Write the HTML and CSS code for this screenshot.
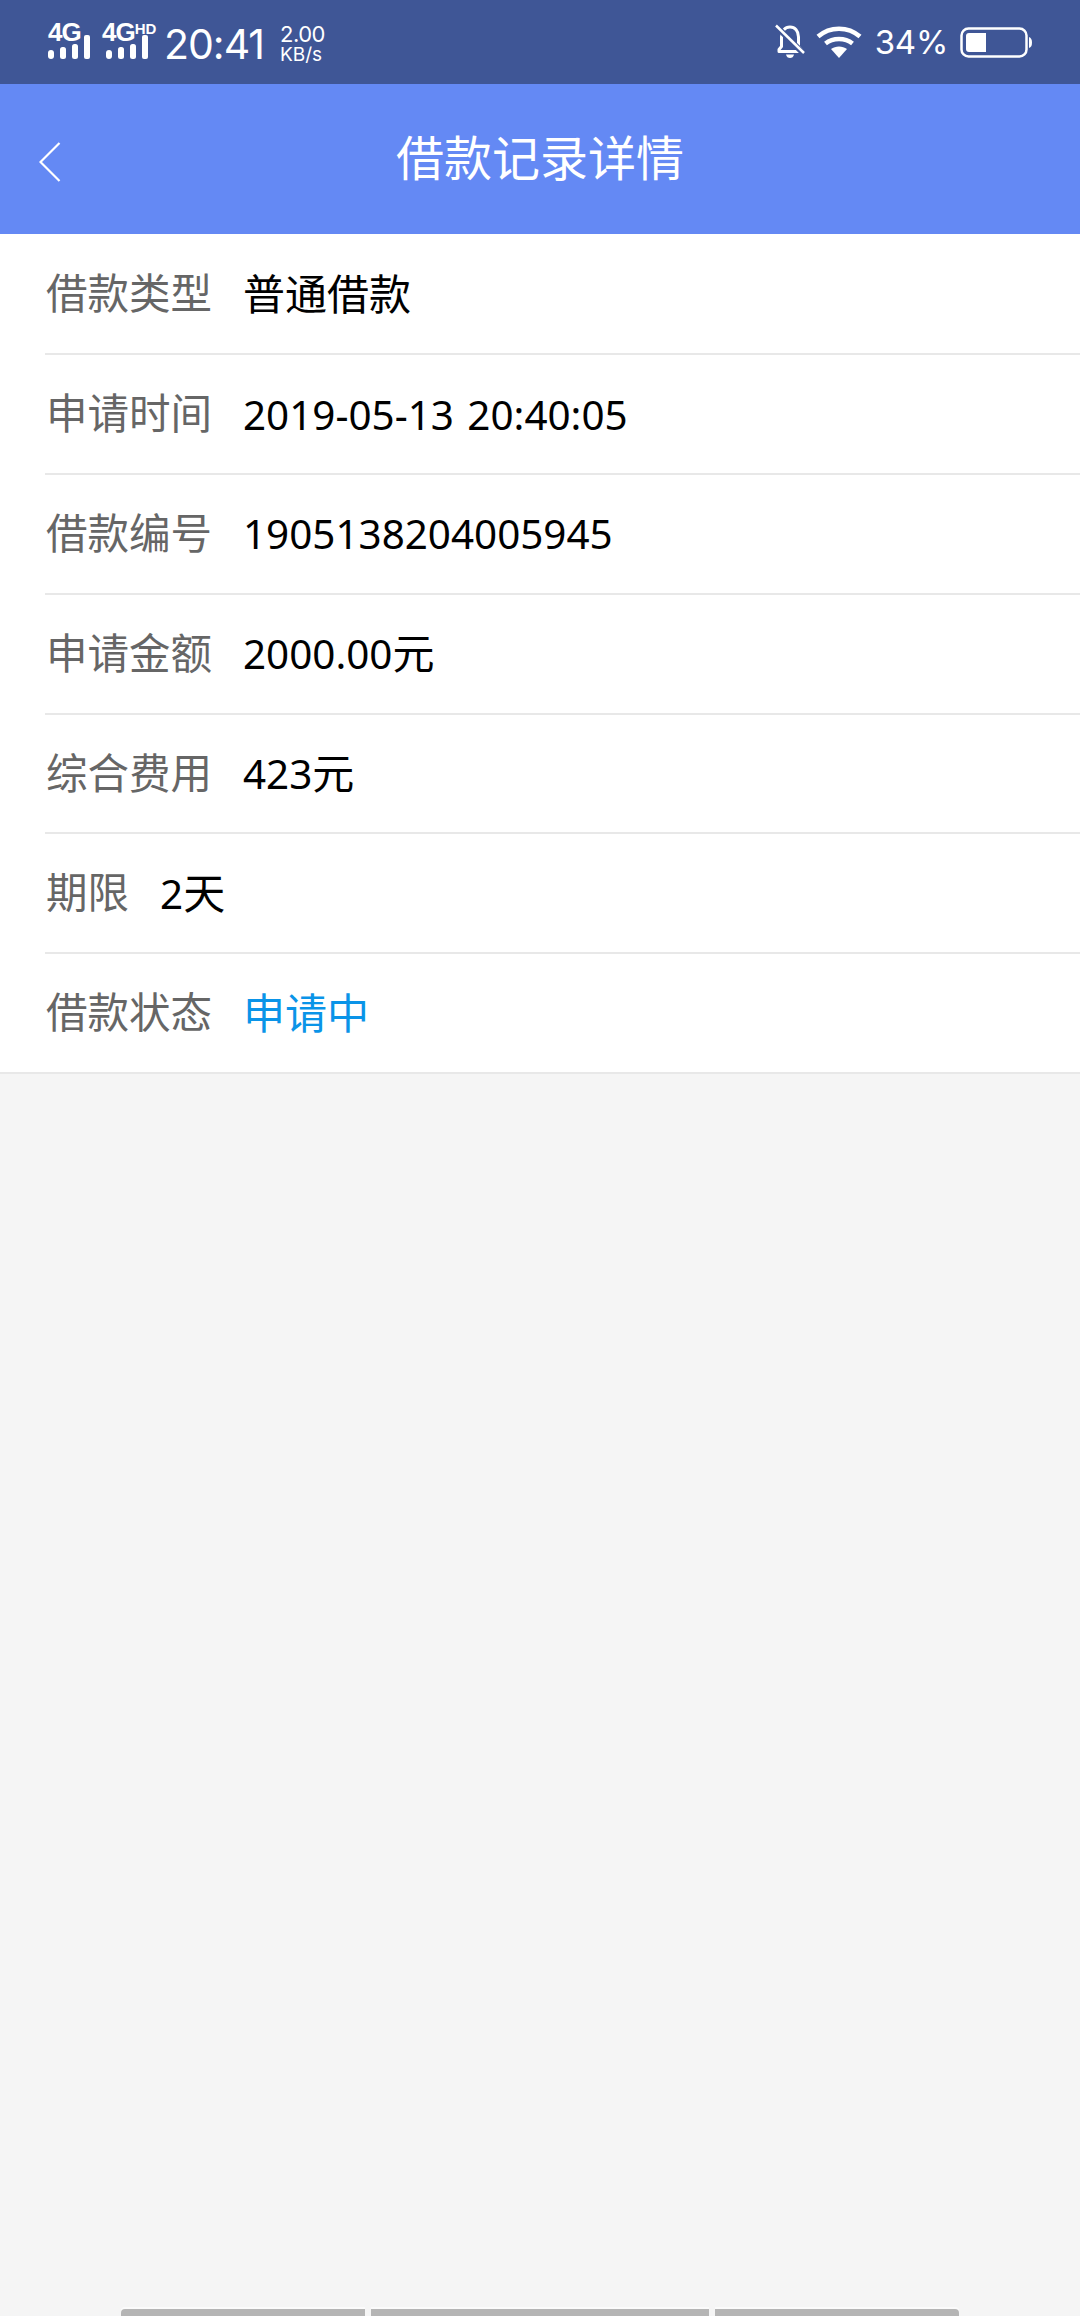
FILE: index.html
```html
<!DOCTYPE html>
<html lang="zh">
<head>
<meta charset="utf-8">
<title>借款记录详情</title>
<link rel="stylesheet" href="styles.css">
</head>
<body>
<div class="status">
  <div class="net">
    <div class="sig"><span class="g">4G</span>
      <svg class="bars" width="42" height="25" viewBox="0 0 42 25"><g fill="#fff"><rect x="0" y="16" width="6" height="9" rx="3"/><rect x="12" y="13" width="6" height="12" rx="2.500"/><rect x="24" y="10" width="6" height="15" rx="2.500"/><rect x="36" y="1" width="6" height="24" rx="2"/></g></svg>
    </div>
    <div class="sig hd"><span class="g">4G<sup class="hdt">HD</sup></span>
      <svg class="bars" width="42" height="25" viewBox="0 0 42 25"><g fill="#fff"><rect x="0" y="16" width="6" height="9" rx="3"/><rect x="12" y="13" width="6" height="12" rx="2.500"/><rect x="24" y="10" width="6" height="15" rx="2.500"/><rect x="36" y="1" width="6" height="24" rx="2"/></g></svg>
    </div>
  </div>
  <span class="time">20:41</span>
  <div class="speed"><span class="sp1">2.00</span><span class="sp2">KB/s</span></div>
  <div class="spacer"></div>
  <svg class="bell" width="32" height="36" viewBox="0 0 32 36"><path d="M5 25.500 L7.500 22.500 V13 C7.500 7 11 3 16 3 C21 3 24.500 7 24.500 13 V22.500 L27 25.500 V27.500 H5 Z" fill="none" stroke="#fff" stroke-width="3" stroke-linejoin="round"/><path d="M12 30.500 H20 C19.500 33 18 34 16 34 C14 34 12.500 33 12 30.500 Z" fill="#fff"/><path d="M2 2 L29 29" stroke="#3f5696" stroke-width="6"/><path d="M2 1.500 L30 29" stroke="#fff" stroke-width="2.500"/></svg>
  <svg class="wifi" width="46" height="34" viewBox="0 0 46 34"><g fill="none" stroke="#fff" stroke-width="4.500"><path d="M2 11.500 C14 1 32 1 44 11.500"/><path d="M9.500 18.500 C17 12.500 29 12.500 36.500 18.500"/></g><path d="M15 24 C19.500 20.500 26.500 20.500 31 24 L23 33 Z" fill="#fff"/></svg>
  <span class="pct">34%</span>
  <svg class="batt" width="72" height="31" viewBox="0 0 72 31"><rect x="1.500" y="1.500" width="65" height="28" rx="7" fill="none" stroke="#fff" stroke-width="2.500"/><path d="M9 6 H26 V25 H9 Q6 25 6 22 V9 Q6 6 9 6 Z" fill="#fff"/><path d="M69 10 Q72 11 72 15.500 Q72 20 69 21 Z" fill="#fff"/></svg>
</div>
<header class="bar">
  <div class="back"><svg width="22" height="40" viewBox="0 0 22 40"><path d="M20.500 1 L1.500 20 L20.500 39" fill="none" stroke="#fff" stroke-width="2.200"/></svg></div>
  <h1 class="title">借款记录详情</h1>
  <div></div>
</header>
<main class="list">
  <div class="row"><span class="label">借款类型</span><span class="value">普通借款</span></div>
  <div class="row"><span class="label">申请时间</span><span class="value"><span class="num">2019-05-13 20:40:05</span></span></div>
  <div class="row"><span class="label">借款编号</span><span class="value"><span class="num">1905138204005945</span></span></div>
  <div class="row"><span class="label">申请金额</span><span class="value"><span class="num">2000.00</span>元</span></div>
  <div class="row"><span class="label">综合费用</span><span class="value"><span class="num">423</span>元</span></div>
  <div class="row"><span class="label">期限</span><span class="value"><span class="num">2</span>天</span></div>
  <div class="row last"><span class="label">借款状态</span><span class="value state">申请中</span></div>
</main>
<div class="fill"></div>
<div class="nav"><i class="seg s1"></i><i class="seg s2"></i><i class="seg s3"></i></div>
</body>
</html>
```

FILE: styles.css
```css
* { box-sizing: border-box; }
html, body { margin: 0; padding: 0; }
body {
  width: 1080px;
  height: 2316px;
  background: #f5f5f5;
  display: flex;
  flex-direction: column;
  overflow: hidden;
  font-family: "Noto Sans", "Noto Sans CJK SC", sans-serif;
}
.status {
  height: 84px;
  flex: none;
  background: #3f5696;
  color: #fff;
  display: flex;
  align-items: center;
  padding: 0 48px;
  font-family: Inter, "Liberation Sans", sans-serif;
}
.net { display: flex; gap: 12px; margin-top: -2px; }
.sig { width: 42px; height: 36px; display: flex; flex-direction: column; }
.sig.hd { margin-right: 10px; width: 52px; }
.sig.hd .bars { margin-left: 4px; }
.g { font-family: "Liberation Sans", sans-serif; font-weight: 700; font-size: 26px; line-height: 18px; height: 18px; letter-spacing: -1px; white-space: nowrap; }
.hdt { font-size: 15px; line-height: 0; vertical-align: 7px; letter-spacing: 0; }
.bars { display: block; margin-top: -7px; }
.time { font-size: 41px; font-weight: 400; letter-spacing: -1px; margin-top: 4px; }
.speed { display: flex; flex-direction: column; margin-left: 16px; margin-top: 2px; }
.sp1 { font-size: 22px; line-height: 22px; letter-spacing: -0.5px; }
.sp2 { font-size: 19px; line-height: 19px; }
.spacer { flex: 1; }
.bell { margin-right: 10px; }
.wifi { margin-right: 13px; }
.pct { font-size: 33px; margin-right: 12px; letter-spacing: -0.3px; }
.bar {
  height: 150px;
  flex: none;
  background: #6489f4;
  display: grid;
  grid-template-columns: 1fr auto 1fr;
  align-items: center;
}
.back { padding-left: 39px; display: flex; margin-top: 5px; }
.title {
  margin: 0 0 9px;
  font-size: 48px;
  font-weight: 400;
  color: #fff;
  font-family: "Noto Sans CJK SC", sans-serif;
}
.list { background: #fff; flex: none; padding-top: 1.500px; }
.row {
  height: 119.8px;
  margin-left: 45px;
  border-bottom: 2px solid #e8e8e8;
  display: flex;
  align-items: center;
  gap: 31px;
  padding-left: 1px;
  padding-bottom: 6px;
}
.row.last { margin-left: 0; padding-left: 46px; }
.label { color: #666; font-size: 41.500px; font-family: "Noto Sans CJK SC", sans-serif; }
.value { color: #000; font-size: 42px; font-family: "Noto Sans CJK SC", sans-serif; }
.num { font-size: 40.400px; font-family: "Noto Sans", sans-serif; word-spacing: 3px; }
.state { color: #0a94e8; }
.fill { flex: 1; }
.nav { height: 9px; flex: none; display: flex; gap: 6px; padding-left: 121px; }
.seg { display: block; height: 7px; margin-top: 2px; background: #b5b5b5; box-shadow: 0 -2px 0 #fbfbfb; }
.s1 { width: 244px; border-radius: 4px 0 0 0; }
.s2 { width: 338px; }
.s3 { width: 244px; border-radius: 0 4px 0 0; }
```
